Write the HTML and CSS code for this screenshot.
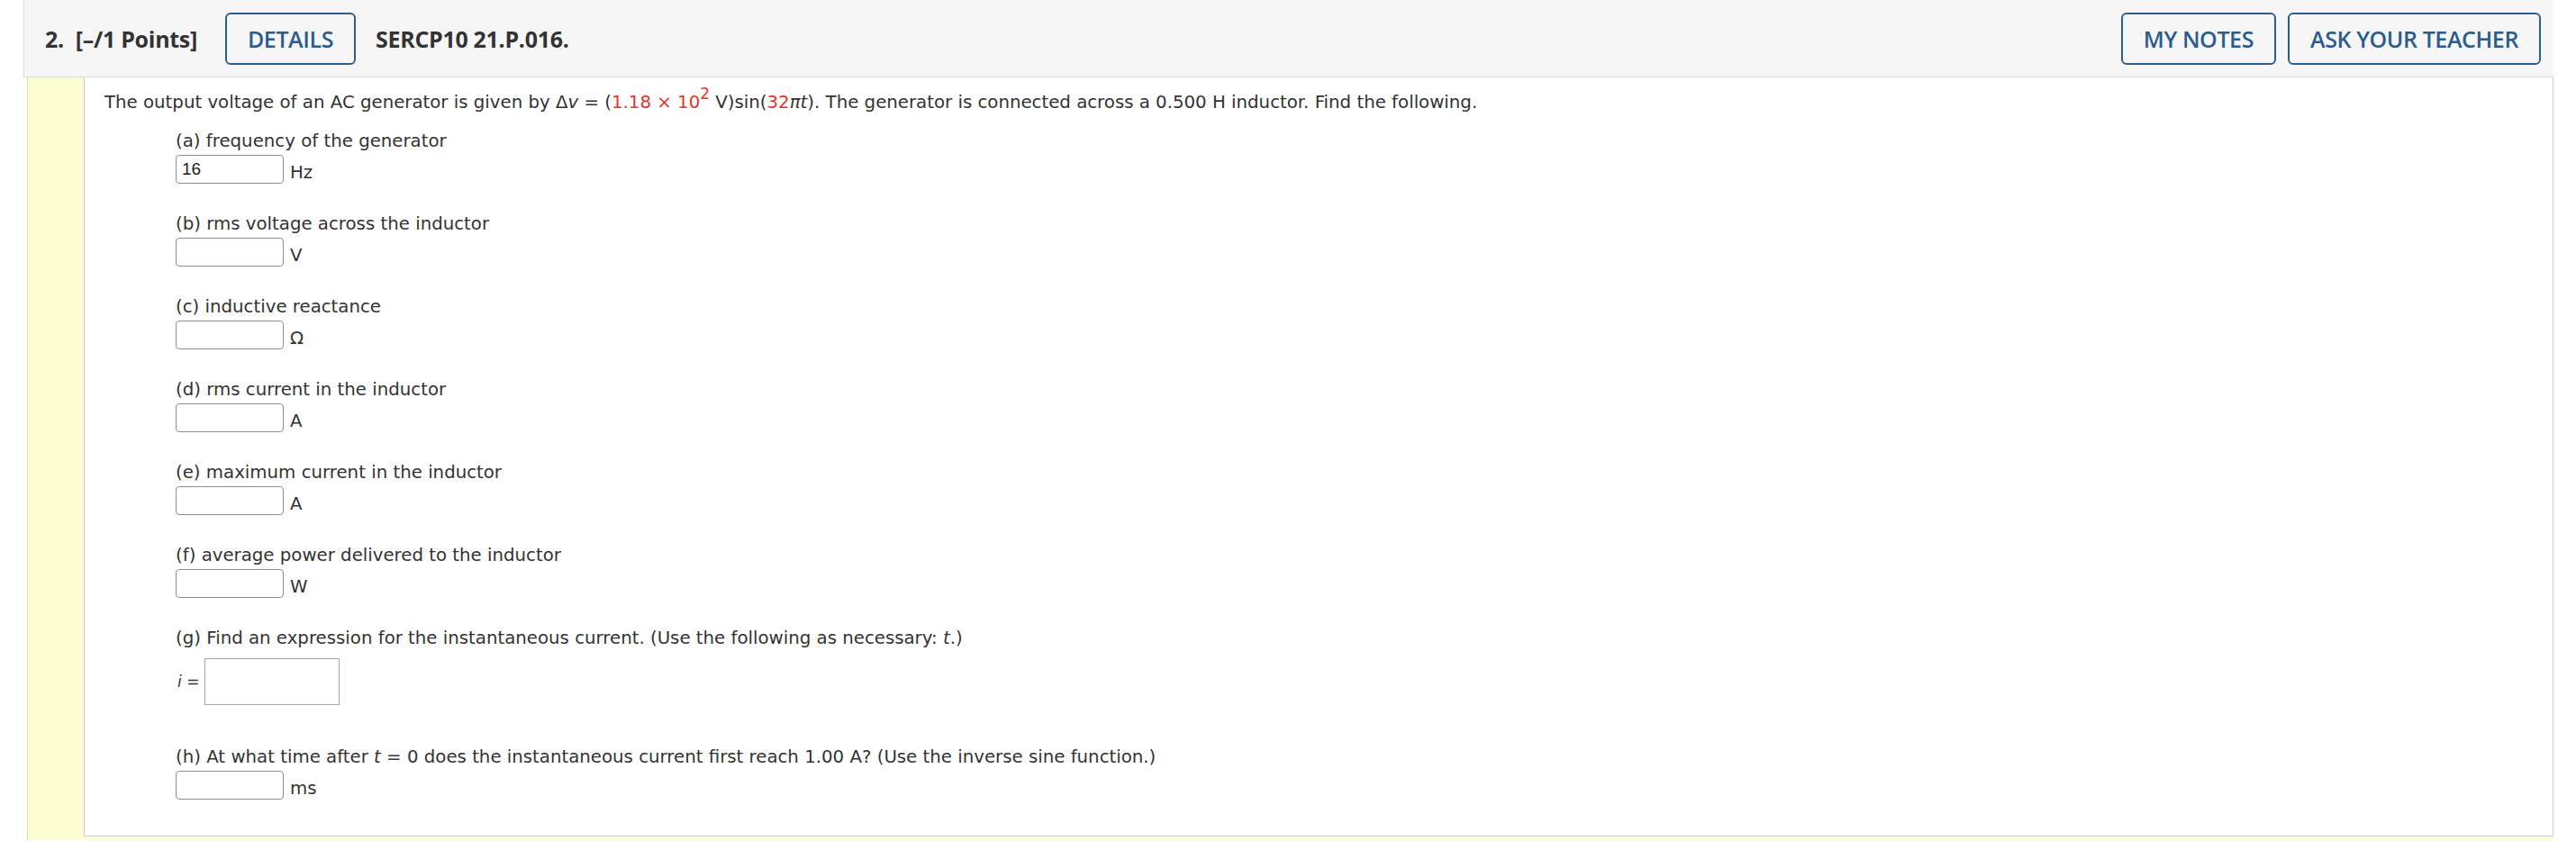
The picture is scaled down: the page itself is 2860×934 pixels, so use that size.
FILE: index.html
```html
<!DOCTYPE html>
<html lang="en">
<head>
<meta charset="utf-8">
<title>SERCP10 21.P.016.</title>
<link rel="stylesheet" href="styles.css">
</head>
<body>
<div class="wrap">
  <div class="qhead">
    <div class="qhead-left">
      <span class="qnum">2.</span>
      <span class="qpoints">[–/1 Points]</span>
      <button class="hbtn details">DETAILS</button>
      <span class="qref">SERCP10 21.P.016.</span>
    </div>
    <div class="qhead-right">
      <button class="hbtn">MY NOTES</button>
      <button class="hbtn">ASK YOUR TEACHER</button>
    </div>
  </div>
  <div class="qbody">
    <div class="qcontent">
      <p class="stem">The output voltage of an AC generator is given by Δ<i>v</i> = (<span class="red">1.18 × 10<sup>2</sup></span> V)sin(<span class="red">32</span><i>πt</i>). The generator is connected across a 0.500 H inductor. Find the following.</p>
      <div class="parts">
        <div class="part">
          <div class="plabel">(a) frequency of the generator</div>
          <div class="prow"><span class="ibox">16</span><span class="unit">Hz</span></div>
        </div>
        <div class="part">
          <div class="plabel">(b) rms voltage across the inductor</div>
          <div class="prow"><span class="ibox"></span><span class="unit">V</span></div>
        </div>
        <div class="part">
          <div class="plabel">(c) inductive reactance</div>
          <div class="prow"><span class="ibox"></span><span class="unit">Ω</span></div>
        </div>
        <div class="part">
          <div class="plabel">(d) rms current in the inductor</div>
          <div class="prow"><span class="ibox"></span><span class="unit">A</span></div>
        </div>
        <div class="part">
          <div class="plabel">(e) maximum current in the inductor</div>
          <div class="prow"><span class="ibox"></span><span class="unit">A</span></div>
        </div>
        <div class="part">
          <div class="plabel">(f) average power delivered to the inductor</div>
          <div class="prow"><span class="ibox"></span><span class="unit">W</span></div>
        </div>
        <div class="part part-g">
          <div class="plabel">(g) Find an expression for the instantaneous current. (Use the following as necessary: <i>t</i>.)</div>
          <div class="exprow"><span class="expvar"><i>i</i> =</span><span class="expbox"></span></div>
        </div>
        <div class="part part-h">
          <div class="plabel">(h) At what time after <i>t</i> = 0 does the instantaneous current first reach 1.00 A? (Use the inverse sine function.)</div>
          <div class="prow"><span class="ibox"></span><span class="unit">ms</span></div>
        </div>
      </div>
    </div>
  </div>
</div>
</body>
</html>
```
FILE: styles.css
```css
html, body {
  margin: 0;
  padding: 0;
  background: #ffffff;
}

.wrap {
  margin-left: 26px;
  width: 2809px;
}

.qhead {
  height: 85px;
  background: #f6f6f6;
  border-left: 1px solid #dedede;
  border-bottom: 1px solid #dcdcdc;
  display: flex;
  align-items: center;
  justify-content: space-between;
  padding: 0 14px 0 23px;
  font-family: "Open Sans", "Liberation Sans", sans-serif;
  color: #333333;
}

.qhead-left {
  display: flex;
  align-items: center;
}

.qhead-right {
  display: flex;
  align-items: center;
  gap: 13px;
}

.qnum,
.qpoints,
.qref {
  font-size: 25px;
  font-weight: 700;
  letter-spacing: -0.3px;
}

.qnum {
  margin-right: 13px;
}

.qpoints {
  margin-right: 31px;
}

.qref {
  margin-left: 22px;
}

.hbtn {
  height: 58px;
  box-sizing: border-box;
  border: 2px solid #2b5f90;
  border-radius: 6px;
  background: transparent;
  color: #2a5d8e;
  font-family: "Open Sans", "Liberation Sans", sans-serif;
  font-size: 25px;
  font-weight: 600;
  padding: 0 23px;
  letter-spacing: -0.4px;
}

.qbody {
  margin-left: 4px;
  background: #fdfdd4;
  border-left: 1px solid #d6d6c0;
  padding: 0 0 4px 62px;
}

.qcontent {
  background: #ffffff;
  border-left: 1px solid #cccccc;
  border-right: 1px solid #cccccc;
  border-bottom: 1px solid #cccccc;
  padding: 16px 0 40px 22px;
  font-family: "DejaVu Sans", Verdana, sans-serif;
  font-size: 19.75px;
  line-height: 24px;
  color: #333333;
}

.stem {
  margin: 0;
}

.red {
  color: #e8332a;
}

.red sup {
  font-size: 17px;
  line-height: 0;
  vertical-align: 10px;
}

.parts {
  padding-left: 79px;
  margin-top: 19px;
}

.part + .part {
  margin-top: 33px;
}

.part.part-g {
  margin-top: 33px;
}

.part.part-h {
  margin-top: 46px;
}

.plabel {
  line-height: 24px;
}

.prow {
  margin-top: 3px;
  display: flex;
  align-items: center;
  gap: 7px;
}

.ibox {
  width: 120px;
  height: 32px;
  box-sizing: border-box;
  border: 1px solid #8e8e8e;
  border-radius: 4px;
  padding: 0 6px;
  font-family: "Liberation Sans", Arial, sans-serif;
  font-size: 19px;
  line-height: 30px;
  color: #222222;
}

.unit {
  line-height: 24px;
  padding-top: 8px;
}

.exprow {
  margin-top: 10px;
  display: flex;
  align-items: center;
  gap: 6px;
}

.expvar {
  font-size: 17px;
  margin-left: 2px;
}

.expbox {
  width: 150px;
  height: 52px;
  box-sizing: border-box;
  border: 1px solid #a6a6a6;
  background: #ffffff;
}
```
